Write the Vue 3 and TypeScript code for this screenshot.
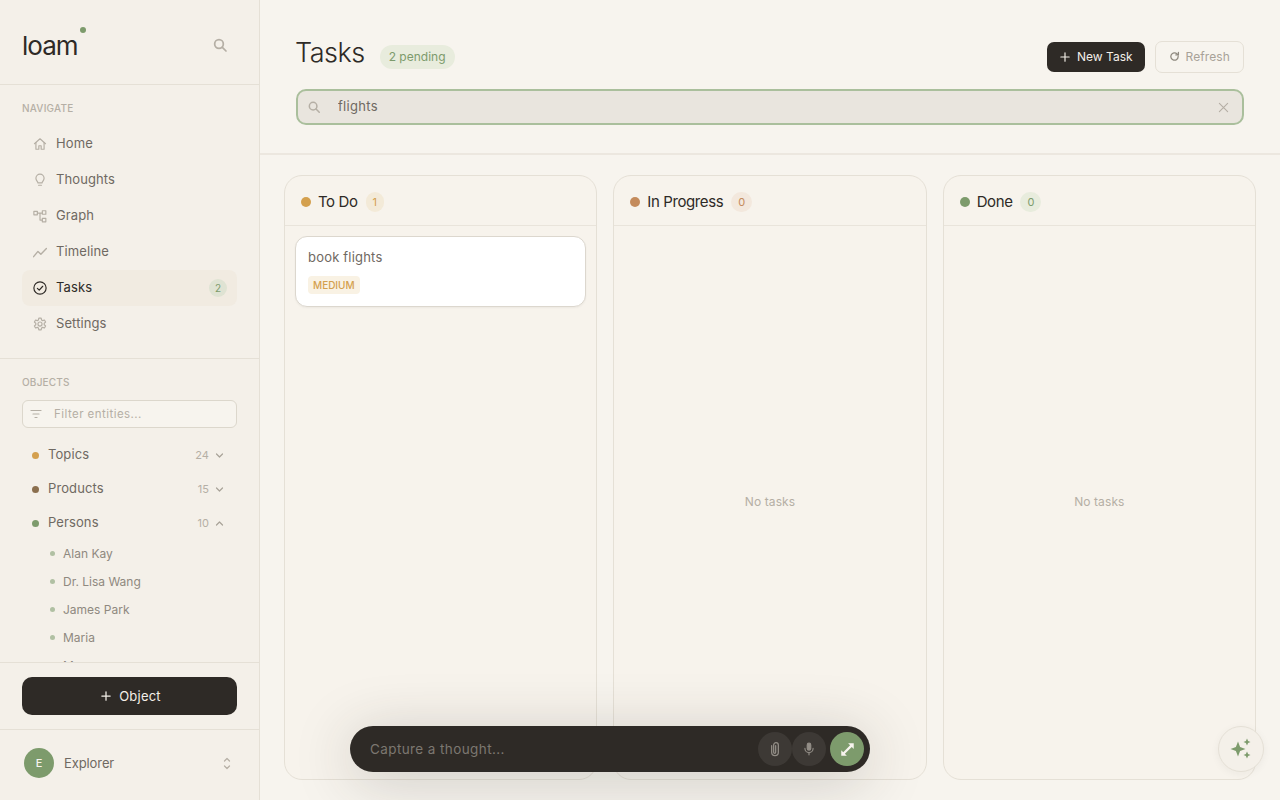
<script setup lang="ts">
import { ref } from 'vue';

const query = ref('flights');

const navItems = [
  { name: 'Home', icon: 'home' },
  { name: 'Thoughts', icon: 'bulb' },
  { name: 'Graph', icon: 'graph' },
  { name: 'Timeline', icon: 'line' },
  { name: 'Tasks', icon: 'check', badge: 2, active: true },
  { name: 'Settings', icon: 'gear' }
];

const objects = [
  { name: 'Topics', count: 24, color: '#d4a04e', open: false },
  { name: 'Products', count: 15, color: '#8b6f4e', open: false },
  { name: 'Persons', count: 10, color: '#7d9b6c', open: true }
];

const persons = ['Alan Kay', 'Dr. Lisa Wang', 'James Park', 'Maria', 'Marcus'];

const columns = [
  { name: 'To Do', color: '#d4a04e', badgeBg: '#f3ead8', badgeFg: '#d4a04e', tasks: [{ title: 'book flights', priority: 'MEDIUM' }] },
  { name: 'In Progress', color: '#c48b5c', badgeBg: '#f3e8dd', badgeFg: '#c48b5c', tasks: [] },
  { name: 'Done', color: '#7d9b6c', badgeBg: '#e8ecdd', badgeFg: '#7d9b6c', tasks: [] }
];
</script>

<template>
  <div class="app">
    <aside class="sidebar">
      <div class="brand">
        <div class="logo">loam<span class="logo-dot"></span></div>
        <svg class="brand-search" width="16" height="16" viewBox="0 0 24 24" fill="none" stroke="currentColor" stroke-width="2.6" stroke-linecap="round"><circle cx="10.5" cy="10.5" r="6.5" /><path d="M15.5 15.5 21 21" /></svg>
      </div>

      <section class="nav-section">
        <div class="section-label">NAVIGATE</div>
        <nav class="nav">
          <a v-for="item in navItems" :key="item.name" class="nav-item" :class="{ active: item.active }">
            <svg class="nav-icon" width="14" height="14" viewBox="0 0 24 24" fill="none" stroke="currentColor" stroke-width="2" stroke-linecap="round" stroke-linejoin="round">
              <template v-if="item.icon === 'home'">
                <path d="M2.5 11.5 12 3l9.5 8.5" /><path d="M5 9.5V21h5v-6h4v6h5V9.5" />
              </template>
              <template v-else-if="item.icon === 'bulb'">
                <path d="M8.5 17c0-2-3.5-4-3.5-8a7 7 0 0 1 14 0c0 4-3.5 6-3.5 8z" /><path d="M9.5 21h5" />
              </template>
              <template v-else-if="item.icon === 'graph'">
                <rect x="1.5" y="4" width="6" height="6" /><rect x="16" y="3" width="6" height="6" /><rect x="16" y="16" width="6" height="6" /><path d="M7.5 7H16M12 7v12h4" />
              </template>
              <template v-else-if="item.icon === 'line'">
                <path d="M1 20 8.5 11l5 5L23 6" stroke-width="2.4" />
              </template>
              <template v-else-if="item.icon === 'check'">
                <circle cx="12" cy="12" r="10.5" /><path d="m7.5 12.5 3.2 3.2 6-6.7" />
              </template>
              <template v-else>
                <circle cx="12" cy="12" r="3.5" /><path d="M10 2h4l.6 3.1 2 1.1 3-1 2 3.5-2.400 2.100v2.400l2.400 2.100-2 3.500-3-1-2 1.100L14 22h-4l-.6-3.100-2-1.100-3 1-2-3.500 2.400-2.100v-2.400L2.400 8.700l2-3.500 3 1 2-1.100z" />
              </template>
            </svg>
            <span class="nav-name">{{ item.name }}</span>
            <span v-if="item.badge" class="nav-badge">{{ item.badge }}</span>
          </a>
        </nav>
      </section>

      <section class="objects">
        <div class="section-label">OBJECTS</div>
        <div class="filter">
          <svg width="12" height="12" viewBox="0 0 24 24" fill="none" stroke="currentColor" stroke-width="2.4" stroke-linecap="round"><path d="M2 5h20M6 12h12M10 19h4" /></svg>
          <span>Filter entities...</span>
        </div>
        <div class="object-list">
          <div v-for="obj in objects" :key="obj.name" class="object-row">
            <span class="object-dot" :style="{ background: obj.color }"></span>
            <span class="object-name">{{ obj.name }}</span>
            <span class="object-count">{{ obj.count }}</span>
            <svg width="9" height="9" viewBox="0 0 24 24" fill="none" stroke="currentColor" stroke-width="3.2" stroke-linecap="round" stroke-linejoin="round">
              <path :d="obj.open ? 'M4 16l8-8 8 8' : 'M4 8l8 8 8-8'" />
            </svg>
          </div>
          <div class="person-list">
            <div v-for="person in persons" :key="person" class="person-row">
              <span class="person-dot"></span>{{ person }}
            </div>
          </div>
        </div>
      </section>

      <div class="add-wrap">
        <button class="add-object">
          <svg width="10" height="10" viewBox="0 0 24 24" fill="none" stroke="currentColor" stroke-width="3" stroke-linecap="round"><path d="M12 2v20M2 12h20" /></svg>
          Object
        </button>
      </div>

      <div class="user">
        <span class="avatar">E</span>
        <span class="user-name">Explorer</span>
        <svg width="8" height="13" viewBox="0 0 8 13" fill="none" stroke="currentColor" stroke-width="1.2" stroke-linecap="round" stroke-linejoin="round"><path d="M1.5 4 4 1.5 6.5 4M1.5 9 4 11.5 6.5 9" /></svg>
      </div>
    </aside>

    <main class="main">
      <header class="header">
        <div class="title-row">
          <h1 class="title">Tasks</h1>
          <span class="pending">2 pending</span>
          <button class="btn-new">
            <svg width="10" height="10" viewBox="0 0 24 24" fill="none" stroke="currentColor" stroke-width="2.8" stroke-linecap="round"><path d="M12 2v20M2 12h20" /></svg>
            New Task
          </button>
          <button class="btn-refresh">
            <svg width="11" height="11" viewBox="0 0 24 24" fill="none" stroke="currentColor" stroke-width="2.8" stroke-linecap="round" stroke-linejoin="round"><path d="M20 12a8 8 0 1 1-2.5-5.800L20 8.500" /><path d="M20.500 3v5.500H15" /></svg>
            Refresh
          </button>
        </div>
        <div class="search">
          <svg width="14" height="14" viewBox="0 0 24 24" fill="none" stroke="currentColor" stroke-width="2.6" stroke-linecap="round"><circle cx="10.5" cy="10.5" r="6.5" /><path d="M15.5 15.5 21 21" /></svg>
          <input v-model="query" class="search-input" />
          <svg width="11" height="11" viewBox="0 0 24 24" fill="none" stroke="currentColor" stroke-width="2.4" stroke-linecap="round"><path d="M3 3l18 18M21 3 3 21" /></svg>
        </div>
      </header>

      <div class="board">
        <div v-for="col in columns" :key="col.name" class="column">
          <div class="column-head">
            <span class="column-dot" :style="{ background: col.color }"></span>
            <span class="column-name">{{ col.name }}</span>
            <span class="column-count" :style="{ background: col.badgeBg, color: col.badgeFg }">{{ col.tasks.length }}</span>
          </div>
          <div class="column-body">
            <div v-for="task in col.tasks" :key="task.title" class="task">
              <div class="task-title">{{ task.title }}</div>
              <span class="priority">{{ task.priority }}</span>
            </div>
            <div v-if="!col.tasks.length" class="empty">No tasks</div>
          </div>
        </div>
      </div>
    </main>

    <div class="capture">
      <span class="capture-text">Capture a thought...</span>
      <button class="round-btn">
        <svg width="16" height="16" viewBox="0 0 24 24" fill="none" stroke="currentColor" stroke-width="1.9" stroke-linecap="round" stroke-linejoin="round"><path d="M7 7v10a5 5 0 0 0 10 0V6a3.5 3.5 0 0 0-7 0v11a1.5 1.5 0 0 0 3 0V7" /></svg>
      </button>
      <button class="round-btn">
        <svg width="14" height="14" viewBox="0 0 24 24" fill="none" stroke="currentColor" stroke-width="2" stroke-linecap="round" stroke-linejoin="round"><rect x="9" y="2" width="6" height="12" rx="3" fill="currentColor" /><path d="M5 11a7 7 0 0 0 14 0M12 18v4" /></svg>
      </button>
      <button class="round-btn expand">
        <svg width="15" height="15" viewBox="0 0 24 24" fill="currentColor" stroke="none"><path d="M13 2h9v9l-3.2-3.2L7.800 18.800 11 22H2v-9l3.200 3.200L16.200 5.200z" /></svg>
      </button>
    </div>

    <button class="assistant">
      <svg width="24" height="24" viewBox="0 0 24 24" fill="#7d9b6c"><path d="M9 4.5 11.100 9.900 16.500 12 11.100 14.100 9 19.500 6.900 14.100 1.500 12 6.900 9.900z" /><path d="M18 1.500 19.100 3.900 21.500 5 19.100 6.100 18 8.500 16.900 6.100 14.500 5 16.900 3.900z" /><path d="M18 14.500 19.100 16.900 21.500 18 19.100 19.100 18 21.500 16.900 19.100 14.500 18 16.900 16.900z" /></svg>
    </button>
  </div>
</template>

<style>
html,
body {
  margin: 0;
  background: #f7f4ee;
}
</style>

<style scoped>
.app {
  display: flex;
  width: 1280px;
  height: 800px;
  overflow: hidden;
  position: relative;
  font-family: Inter, "Liberation Sans", sans-serif;
  color: #2e2a26;
}

button {
  font-family: inherit;
  cursor: pointer;
}

.sidebar {
  width: 260px;
  flex-shrink: 0;
  box-sizing: border-box;
  height: 800px;
  display: flex;
  flex-direction: column;
  background: #f4f0e9;
  border-right: 1px solid #e5e0d6;
}

.brand {
  height: 85px;
  flex-shrink: 0;
  box-sizing: border-box;
  border-bottom: 1px solid #e5e0d6;
  padding: 0 31px 0 22px;
  display: flex;
  align-items: center;
  justify-content: space-between;
}

.logo {
  position: relative;
  font-size: 26px;
  font-weight: 400;
  letter-spacing: -1px;
  line-height: 32px;
  margin-top: 8px;
}

.logo-dot {
  position: absolute;
  top: -3px;
  right: -8px;
  width: 6px;
  height: 6px;
  border-radius: 50%;
  background: #7d9b6c;
}

.brand-search {
  color: #b5afa5;
  margin-top: 6px;
}

.nav-section {
  height: 274px;
  flex-shrink: 0;
  box-sizing: border-box;
  padding: 17px 22px 0;
  border-bottom: 1px solid #e5e0d6;
}

.section-label {
  font-size: 10px;
  font-weight: 500;
  letter-spacing: 0.2px;
  color: #b5afa5;
  line-height: 12px;
}

.nav {
  margin-top: 12px;
  display: flex;
  flex-direction: column;
}

.nav-item {
  display: flex;
  align-items: center;
  height: 36px;
  padding: 0 10px 0 11px;
  border-radius: 8px;
  font-size: 13px;
  letter-spacing: 0.1px;
  color: #6f6962;
}

.nav-item.active {
  background: #f1ebe1;
  color: #2e2a26;
}

.nav-icon {
  color: #b5afa5;
  margin-right: 9px;
}

.nav-item.active .nav-icon {
  color: #2e2a26;
}

.nav-name {
  flex: 1;
  margin-bottom: 2px;
}

.nav-badge {
  width: 18px;
  height: 18px;
  border-radius: 50%;
  background: #dfe3d3;
  color: #7d9b6c;
  font-size: 10px;
  display: flex;
  align-items: center;
  justify-content: center;
}

.objects {
  flex: 1;
  min-height: 0;
  overflow: hidden;
  padding: 17px 22px 0;
}

.filter {
  margin-top: 12px;
  height: 28px;
  box-sizing: border-box;
  border: 1px solid #dcd7cc;
  border-radius: 6px;
  background: #f7f4ee;
  display: flex;
  align-items: center;
  padding: 0 7px;
  gap: 12px;
  font-size: 11.5px;
  letter-spacing: 0.45px;
  color: #b5afa5;
}

.object-list {
  margin-top: 10px;
}

.object-row {
  height: 34px;
  display: flex;
  align-items: center;
  padding: 0 13px 0 10px;
  font-size: 13px;
  color: #6f6962;
  letter-spacing: 0.1px;
}

.object-row svg {
  color: #a8a298;
  margin-left: 7px;
}

.object-dot {
  width: 7px;
  height: 7px;
  border-radius: 50%;
  margin-right: 9px;
}

.object-name {
  flex: 1;
  margin-bottom: 2px;
}

.object-count {
  font-size: 11px;
  color: #b5afa5;
  margin-right: -1px;
}

.person-list {
  margin-top: -1px;
}

.person-row {
  height: 28px;
  display: flex;
  align-items: center;
  padding-left: 28px;
  font-size: 12px;
  color: #8f897f;
}

.person-dot {
  width: 5px;
  height: 5px;
  border-radius: 50%;
  background: #b0c0a3;
  margin-right: 8px;
}

.add-wrap {
  flex-shrink: 0;
  padding: 14px 22px;
  border-top: 1px solid #e5e0d6;
  border-bottom: 1px solid #e5e0d6;
}

.add-object {
  width: 100%;
  height: 38px;
  padding: 0 0 0 3px;
  border: none;
  border-radius: 10px;
  background: #2e2a26;
  color: #f3efe8;
  font-size: 13px;
  letter-spacing: 0.2px;
  display: flex;
  align-items: center;
  justify-content: center;
  gap: 8px;
}

.user {
  height: 70px;
  flex-shrink: 0;
  box-sizing: border-box;
  display: flex;
  align-items: center;
  padding: 0 28px 4px 24px;
  color: #b5afa5;
}

.avatar {
  width: 30px;
  height: 30px;
  border-radius: 50%;
  background: #7d9b6c;
  color: #f7f4ee;
  font-size: 11px;
  font-weight: 500;
  display: flex;
  align-items: center;
  justify-content: center;
}

.user-name {
  flex: 1;
  margin-left: 10px;
  font-size: 13px;
  letter-spacing: -0.1px;
  color: #6f6962;
}

.main {
  flex: 1;
  min-width: 0;
  display: flex;
  flex-direction: column;
  background: #f7f4ee;
}

.header {
  height: 155px;
  flex-shrink: 0;
  box-sizing: border-box;
  padding: 32px 36px 0;
  border-bottom: 2px solid #ece7df;
}

.title-row {
  display: flex;
  align-items: center;
  height: 41px;
}

.title {
  margin: 0 0 0 -1px;
  font-size: 27px;
  font-weight: 300;
  letter-spacing: -0.5px;
  color: #2e2a26;
}

.pending {
  margin-left: 15px;
  margin-top: 9px;
  height: 24px;
  padding: 0 9px 1px;
  box-sizing: border-box;
  border-radius: 12px;
  background: #e8ecdd;
  color: #7d9b6c;
  font-size: 12px;
  display: flex;
  align-items: center;
}

.btn-new {
  margin-left: auto;
  margin-top: 8px;
  height: 30px;
  padding: 0 12px 0 13px;
  border: none;
  border-radius: 7px;
  background: #2e2a26;
  color: #f3efe8;
  font-size: 12px;
  display: flex;
  align-items: center;
  gap: 7px;
}

.btn-refresh {
  margin-left: 10px;
  margin-top: 8px;
  height: 32px;
  padding: 0 13px;
  border: 1px solid #e5e0d6;
  border-radius: 7px;
  background: transparent;
  color: #a8a298;
  font-size: 12px;
  letter-spacing: 0.1px;
  display: flex;
  align-items: center;
  gap: 6px;
}

.btn-refresh svg {
  color: #8f897f;
}

.search {
  margin-top: 16px;
  height: 36px;
  box-sizing: border-box;
  border: 2px solid #aabf9c;
  border-radius: 10px;
  background: #e9e5de;
  display: flex;
  align-items: center;
  padding: 0 13px 0 9px;
  color: #b5afa5;
}

.search-input {
  flex: 1;
  margin-left: 17px;
  margin-bottom: 2px;
  border: none;
  outline: none;
  background: transparent;
  font-family: inherit;
  font-size: 13px;
  letter-spacing: 0.3px;
  color: #6f6962;
  padding: 0;
}

.board {
  flex: 1;
  min-height: 0;
  padding: 20px 24px;
  display: grid;
  grid-template-columns: repeat(3, 1fr);
  gap: 16px;
}

.column {
  border: 1px solid #e5e0d6;
  border-radius: 18px;
  background: #f7f3ec;
  display: flex;
  flex-direction: column;
  min-height: 0;
}

.column-head {
  height: 50px;
  flex-shrink: 0;
  box-sizing: border-box;
  border-bottom: 1px solid #e9e4db;
  padding: 2px 16px 0;
  display: flex;
  align-items: center;
}

.column-dot {
  width: 10px;
  height: 10px;
  border-radius: 50%;
  margin-right: 7px;
}

.column-name {
  font-size: 15px;
  letter-spacing: -0.4px;
  color: #2e2a26;
}

.column-count {
  margin-left: 8px;
  min-width: 18px;
  height: 20px;
  padding: 0 7px;
  box-sizing: border-box;
  border-radius: 10px;
  font-size: 11px;
  display: flex;
  align-items: center;
  justify-content: center;
}

.column-body {
  flex: 1;
  padding: 10px;
  display: flex;
  flex-direction: column;
}

.task {
  height: 71px;
  box-sizing: border-box;
  border: 1px solid #dcd7ce;
  border-radius: 12px;
  background: #fff;
  padding: 11px 12px;
  box-shadow: 0 1px 2px rgba(46, 42, 38, 0.05);
}

.task-title {
  font-size: 13px;
  letter-spacing: 0.2px;
  line-height: 18px;
  color: #6f6962;
}

.priority {
  display: inline-block;
  margin-top: 10px;
  padding: 0 5px;
  height: 18px;
  line-height: 18px;
  border-radius: 4px;
  background: #f9f2e4;
  color: #d4a04e;
  font-size: 10px;
  font-weight: 500;
}

.empty {
  flex: 1;
  display: flex;
  align-items: center;
  justify-content: center;
  padding-bottom: 2px;
  font-size: 12px;
  letter-spacing: 0.1px;
  color: #b5afa5;
}

.capture {
  position: absolute;
  left: 350px;
  top: 726px;
  width: 520px;
  height: 46px;
  box-sizing: border-box;
  border-radius: 23px;
  background: #2e2a26;
  box-shadow: 0 8px 60px rgba(46, 42, 38, 0.22);
  display: flex;
  align-items: center;
  padding: 0 6px 0 20px;
}

.capture-text {
  flex: 1;
  font-size: 13.5px;
  letter-spacing: 0.4px;
  color: #7c7770;
}

.round-btn {
  width: 34px;
  height: 34px;
  padding: 0;
  border: none;
  border-radius: 50%;
  background: #3d3935;
  color: #938e87;
  display: flex;
  align-items: center;
  justify-content: center;
}

.round-btn.expand {
  margin-left: 4px;
  background: #7d9b6c;
  color: #f7f4ee;
}

.assistant {
  position: absolute;
  left: 1218px;
  top: 726px;
  width: 46px;
  height: 46px;
  padding: 0;
  border: 1px solid #e5e0d6;
  border-radius: 50%;
  background: #f4f0e9;
  box-shadow: 0 2px 8px rgba(46, 42, 38, 0.05);
  display: flex;
  align-items: center;
  justify-content: center;
}
</style>
